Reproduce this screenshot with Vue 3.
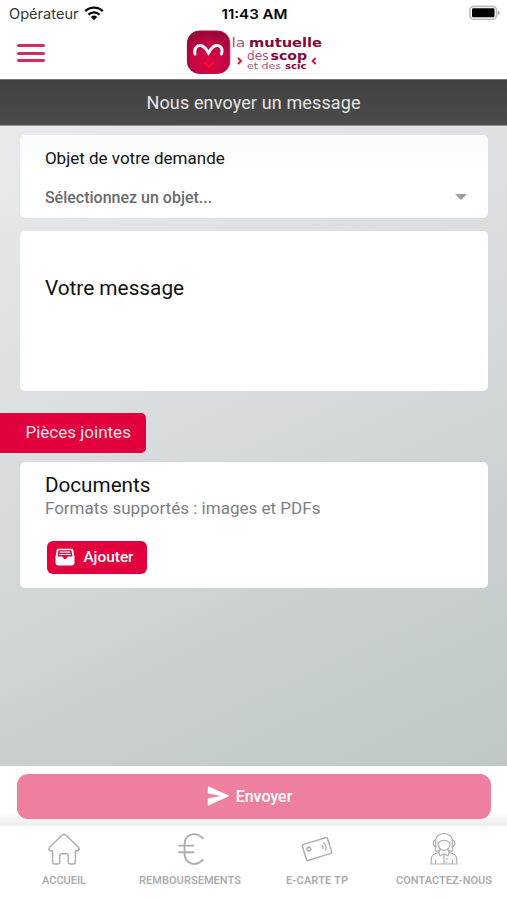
<script setup>
import { ref } from 'vue' ;

const subject = ref( 'Sélectionnez un objet...' ) ;

const tabs = [
	{ id: 'home', label: 'ACCUEIL', width: 44 },
	{ id: 'refunds', label: 'REMBOURSEMENTS', width: 102 },
	{ id: 'card', label: 'E-CARTE TP', width: 62 },
	{ id: 'contact', label: 'CONTACTEZ-NOUS', width: 96 }
] ;
</script>

<template>
	<div class="screen">
		<header class="top">
			<div class="status">
				<div class="carrier">
					<svg width="70" height="20" viewBox="0 0 70 20">
						<text x="0" y="14.7" textLength="69.5" lengthAdjust="spacingAndGlyphs">Opérateur</text>
					</svg>
					<svg class="wifi" width="20" height="15" viewBox="0 0 20 15">
						<g fill="none" stroke="#050505" stroke-width="2.4">
							<path d="M1.2 5.2C6.2.4 13.8.4 18.8 5.2" />
							<path d="M4.4 8.6C7.6 5.6 12.4 5.6 15.6 8.6" />
						</g>
						<path d="M6.8 10.9Q10 8.3 13.2 10.9L10 14.2Z" fill="#050505" />
					</svg>
				</div>
				<svg class="clock" width="68" height="20" viewBox="0 0 68 20">
					<text x="0.5" y="14.8" textLength="66" lengthAdjust="spacingAndGlyphs">11:43 AM</text>
				</svg>
				<svg class="battery" width="32" height="16" viewBox="0 0 32 16">
					<rect x="1" y="1.4" width="26.5" height="12.8" rx="3.6" fill="#fff" stroke="#bcbcbc" stroke-width="1.6" />
					<rect x="3" y="3.3" width="22.5" height="9" rx="1.3" fill="#000" />
					<path d="M28.8 5.3Q33 7.8 28.8 10.3Z" fill="#aaa" />
				</svg>
			</div>
			<div class="brand">
				<button class="menu"><i /><i /><i /></button>
				<svg class="logo" width="138" height="46" viewBox="186 29 138 46">
					<defs>
						<radialGradient id="heart" cx=".5" cy=".7" r=".75">
							<stop offset="0" stop-color="#e0063f" />
							<stop offset=".5" stop-color="#c40744" />
							<stop offset="1" stop-color="#93053a" />
						</radialGradient>
						<linearGradient id="rim" x1="0" y1="0" x2="1" y2="0">
							<stop offset="0" stop-color="#8d0636" />
							<stop offset="1" stop-color="#dc1242" />
						</linearGradient>
					</defs>
					<rect x="187.4" y="31" width="42.4" height="42.4" rx="12" fill="url(#heart)" stroke="url(#rim)" stroke-width="1" />
					<path d="M195 54C193.8 48.5 197 45.2 200.5 45.5C205 45.9 206.5 49.8 208.5 53C210.5 49.8 212 45.9 216.5 45.5C220.5 45.2 223.4 48.5 221.4 54" fill="none" stroke="#fff" stroke-width="3" stroke-linecap="round" />
					<path d="M203.3 61V63.2L208.7 68.2L214.2 63.2V61L208.7 65Z" fill="#f50b3c" />
					<g fill="#ab5580">
						<text x="231.5" y="46.7" font-size="13" textLength="14" lengthAdjust="spacingAndGlyphs">la</text>
						<text x="247" y="59.8" font-size="11.5" textLength="21.5" lengthAdjust="spacingAndGlyphs">des</text>
						<text x="247" y="69.3" font-size="9.3" textLength="34" lengthAdjust="spacingAndGlyphs">et des</text>
					</g>
					<g fill="#850638" font-weight="700">
						<text x="249" y="46.7" font-size="11.5" textLength="73" lengthAdjust="spacingAndGlyphs">mutuelle</text>
						<text x="270.5" y="59.8" font-size="12" textLength="36.5" lengthAdjust="spacingAndGlyphs">scop</text>
						<text x="285" y="69.3" font-size="9" textLength="21.5" lengthAdjust="spacingAndGlyphs">scic</text>
					</g>
					<path d="M238 58L241 61L238 64M315.6 58L312.6 61L315.6 64" fill="none" stroke="#dc1243" stroke-width="1.9" />
				</svg>
			</div>
		</header>

		<h1 class="title">
			<svg width="216" height="28" viewBox="0 0 216 28">
				<text x="0.5" y="19.5" textLength="214">Nous envoyer un message</text>
			</svg>
		</h1>

		<main class="content">
			<section class="card subject">
				<label>Objet de votre demande</label>
				<div class="select">
					<span>{{ subject }}</span>
					<i class="caret" />
				</div>
			</section>

			<section class="card message">Votre message</section>

			<h2 class="ribbon">Pièces jointes</h2>

			<section class="card documents">
				<h3>Documents</h3>
				<p>Formats supportés : images et PDFs</p>
				<button class="add">
					<svg width="20" height="18" viewBox="0 0 20 18">
						<path d="M3.4.8H16.6Q18 .8 18.3 2.2L19.5 9V15Q19.5 17.4 17.1 17.4H2.9Q.5 17.4.5 15V9L1.7 2.2Q2 .8 3.4.8Z" fill="#fff" />
						<path d="M3.6 2.2H16.4L17.5 8.4H13.2Q12.2 8.4 12 9.5Q11.5 11.2 10 11.2Q8.5 11.2 8 9.5Q7.8 8.4 6.8 8.4H2.5Z" fill="#e2003d" />
						<path d="M4.8 4.1H15.2M4.2 6.5H15.8" stroke="#fff" stroke-width="1.1" />
					</svg>
					<span>Ajouter</span>
				</button>
			</section>
		</main>

		<div class="submit">
			<button class="send">
				<svg width="22" height="20" viewBox="0 0 22 20">
					<path d="M1 1Q.7 0 1.8.4L21.3 9.2Q22.4 10 21.3 10.6L1.8 19.5Q.7 19.8.7 18.8V12.5L13.5 9.9L.7 7.3Z" fill="#fff" />
				</svg>
				<span>Envoyer</span>
			</button>
		</div>

		<nav class="tabs">
			<a v-for="tab in tabs" :key="tab.id" class="tab">
				<svg class="glyph" width="34" height="34" viewBox="0 0 34 34">
					<path v-if="tab.id === 'home'" d="M15.6 2.8Q17 1.6 18.4 2.8L31.3 15Q32.7 16.5 31.5 18.2Q30.7 19.3 28.4 18.9V29.4Q28.4 32 25.8 32H23.3Q21.3 32 21.3 30V24.2Q21.3 21.8 19 21.8H15Q12.7 21.8 12.7 24.2V30Q12.7 32 10.7 32H8.2Q5.6 32 5.6 29.4V18.9Q3.3 19.3 2.5 18.2Q1.3 16.5 2.7 15Z" />
					<path v-else-if="tab.id === 'refunds'" stroke-width="1.9" d="M29.8 6.2C21.5-1.5 11.5 2.8 11.5 12.5V21C11.5 31.5 21.8 35.5 29.8 28M6 13.6H20.5M6 20.3H20.5" />
					<g v-else-if="tab.id === 'card'" transform="rotate(-17 17 17)">
						<rect x="3.8" y="8.7" width="26.4" height="16.6" rx="1.8" />
						<circle cx="9.2" cy="14.7" r="1.9" />
						<path d="M22.6 14.8Q23.8 16.6 22.6 18.4M25 13Q27.6 16.6 25 20.2" stroke-width="1.3" />
					</g>
					<g v-else stroke-width="1.2">
						<path d="M8.6 8C10.5-.4 23.5-.4 25.4 8M8.8 8H7.8Q6.2 9 6.2 11.2Q6.2 13.8 8.8 14.6ZM25.2 8H26.2Q27.8 9 27.8 11.2Q27.8 13.8 25.2 14.6Z" />
						<path d="M11 10.5C11 15 13 18.3 17 18.3S23 15 23 10.5C21.5 10.3 20.8 8.3 17 8.3S12.5 10.3 11 10.5Z" />
						<path d="M8.8 15Q6.7 18.6 10.4 19.5L12.8 17.5M25.2 15Q27.3 18.6 23.6 19.5L21.2 17.5" />
						<path d="M13.2 17.8L11.8 20.5L13 24L17 21.8L21 24L22.2 20.5L20.8 17.8M11.8 20.5C6.5 21.6 4.2 23.5 4.2 27.5V32H29.8V27.5C29.8 23.5 27.5 21.6 22.2 20.5M8.6 32V27.5M25.4 32V27.5M17 22V32M19 27H21M19 30H20" />
					</g>
				</svg>
				<svg class="caption" :width="tab.width" height="14" :viewBox="`0 0 ${tab.width} 14`">
					<text x="0" y="10.3" :textLength="tab.width">{{ tab.label }}</text>
				</svg>
			</a>
		</nav>
	</div>
</template>

<style>
body {
	overflow: hidden;
}
</style>

<style scoped>
.screen {
	display: flex;
	flex-direction: column;
	height: 900px;
	font-family: Roboto, sans-serif;
	background: #fff;
	color: #111;
}

svg {
	display: block;
	flex-shrink: 0;
}

button {
	border: none;
	padding: 0;
	font: inherit;
	cursor: pointer;
}

h1,
h2,
h3,
p {
	margin: 0;
	font-weight: 400;
}

.top {
	height: 79px;
	flex-shrink: 0;
}

.status {
	display: grid;
	grid-template-columns: 1fr 68px 1fr;
	align-items: start;
	height: 28px;
	padding: 4px 6px 0 9px;
	box-sizing: border-box;
	font-family: Inter, sans-serif;
}

.carrier {
	display: flex;
	font-size: 14px;
}

.carrier text {
	fill: #333;
}

.wifi {
	margin: 2px 0 0 5px;
}

.clock {
	font-size: 13.5px;
	font-weight: 600;
}

.battery {
	justify-self: end;
	margin-top: 1.3px;
}

.brand {
	display: grid;
	grid-template-columns: 169px auto;
	height: 51px;
	padding: 1px 0 0 17px;
	box-sizing: border-box;
}

.menu {
	display: flex;
	flex-direction: column;
	justify-content: space-between;
	width: 28px;
	height: 18px;
	margin-top: 15px;
	background: none;
}

.menu i {
	height: 3px;
	border-radius: 2px;
	background: #d92a5c;
}

.logo {
	font-family: "DejaVu Sans", sans-serif;
}

.title {
	display: flex;
	justify-content: center;
	height: 46px;
	flex-shrink: 0;
	padding-top: 9px;
	box-sizing: border-box;
	border-top: 1px solid #777;
	background: linear-gradient(#414141, #4b4b4b);
	font-size: 18px;
}

.title text {
	fill: #e6e6e6;
}

.content {
	height: 641px;
	flex-shrink: 0;
	padding: 9.4px 19.5px 0 20.4px;
	box-sizing: border-box;
	border-top: 1px solid #929496;
	background: linear-gradient(155deg, #e7ebee 0%, #d9dddf 40%, #cbd1d2 70%, #c0c7c8 100%);
}

.card {
	box-sizing: border-box;
	border-radius: 5px;
	background: #fff;
}

.subject {
	height: 83px;
	padding: 11.4px 21px 0 24.5px;
	background: linear-gradient(#fafbfb, #fff 65%);
}

.subject label {
	display: block;
	font-size: 17px;
	line-height: 22px;
}

.select {
	display: flex;
	justify-content: space-between;
	align-items: center;
	margin-top: 19.4px;
	font-size: 16px;
	line-height: 20px;
	font-weight: 500;
	color: #6b6b6b;
}

.caret {
	margin-top: -3px;
	border: 6px solid transparent;
	border-top-color: #9d9d9d;
	border-bottom: none;
}

.message {
	height: 160px;
	margin-top: 12.3px;
	padding: 44.6px 24.5px;
	font-size: 20.8px;
	line-height: 26px;
}

.ribbon {
	width: 146px;
	height: 40px;
	margin: 22px 0 0 -20.4px;
	padding-left: 25.5px;
	box-sizing: border-box;
	border-radius: 0 5px 5px 0;
	background: #e2003d;
	color: #fbe6ec;
	font-size: 17px;
	line-height: 39px;
}

.documents {
	height: 126px;
	margin-top: 9.6px;
	padding: 11px 24.5px;
}

.documents h3 {
	font-size: 20.7px;
	line-height: 24px;
}

.documents p {
	color: #7c8084;
	font-size: 17.05px;
	line-height: 23px;
}

.add {
	display: flex;
	align-items: center;
	gap: 8px;
	width: 100px;
	height: 33px;
	margin: 20.5px 0 0 2px;
	padding-left: 8.5px;
	border-radius: 6px;
	background: #e2003d;
	color: #fff;
	font-size: 15.4px;
	font-weight: 500;
}

.submit {
	height: 60px;
	flex-shrink: 0;
	padding: 8px 16.5px 0;
	box-sizing: border-box;
	background: linear-gradient(#fff 75%, #ececec);
}

.send {
	display: flex;
	justify-content: center;
	align-items: center;
	gap: 7px;
	width: 100%;
	height: 44.5px;
	padding-right: 8px;
	border-radius: 11px;
	background: #ef7f9f;
	color: #fff;
	font-size: 16px;
	font-weight: 500;
}

.tabs {
	display: grid;
	grid-template-columns: repeat(4, 1fr);
	flex: 1;
	background: #fff;
}

.tab {
	display: flex;
	flex-direction: column;
	align-items: center;
	padding: 6px 0 0 0.6px;
}

.glyph {
	fill: none;
	stroke: #aeb0b0;
	stroke-width: 1.5;
	stroke-linejoin: round;
	stroke-linecap: round;
}

.caption {
	margin-top: 7.6px;
	font-size: 11px;
	font-weight: 600;
}

.caption text {
	fill: #acaeb0;
}
</style>
